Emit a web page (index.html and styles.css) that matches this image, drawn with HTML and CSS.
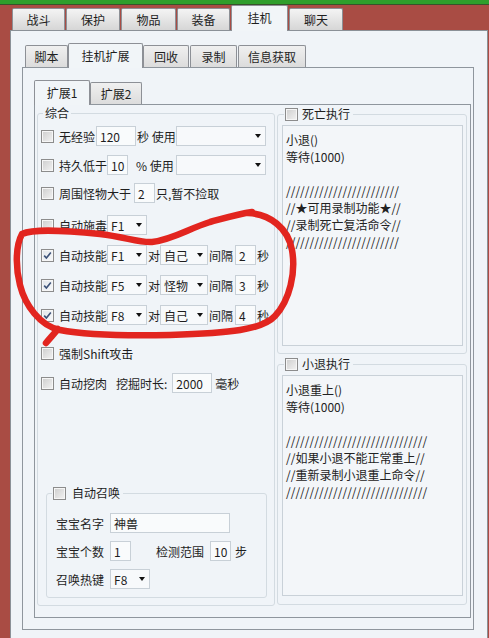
FILE: index.html
```html
<!DOCTYPE html>
<html lang="zh-CN">
<head>
  <meta charset="UTF-8">
  <meta name="viewport" content="width=device-width, initial-scale=1.0">
  <title>挂机扩展</title>
  <link rel="stylesheet" href="styles.css">
</head>
<body>
  <div class="topbar"></div>
  <div class="main">
    <div class="tabs outer-tabs">
      <div class="tab w53">战斗</div>
      <div class="tab w54">保护</div>
      <div class="tab w55">物品</div>
      <div class="tab w53">装备</div>
      <div class="tab active w57">挂机</div>
      <div class="tab w54">聊天</div>
    </div>

    <div class="page">
      <div class="tabs sub-tabs">
        <div class="tab w43">脚本</div>
        <div class="tab active w75">挂机扩展</div>
        <div class="tab w46">回收</div>
        <div class="tab w47 ml1">录制</div>
        <div class="tab w68 ml1">信息获取</div>
      </div>

      <div class="panel">
        <div class="tabs sub-tabs">
          <div class="tab active w56">扩展1</div>
          <div class="tab w52">扩展2</div>
        </div>

        <div class="panel inner">
          <fieldset class="group main-group">
            <legend>综合</legend>

            <div class="row">
              <span class="cb"></span><span>无经验</span><span class="box w40 ml1">120</span><span class="ml1">秒 使用</span>
              <span class="select w90 push"><i class="arrow"></i></span>
            </div>
            <div class="row mt9">
              <span class="cb"></span><span>持久低于</span><span class="box w21">10</span><span class="ml8">% 使用</span>
              <span class="select w90 push"><i class="arrow"></i></span>
            </div>
            <div class="row mt8">
              <span class="cb"></span><span>周围怪物大于</span><span class="box w21 ml3">2</span><span class="ml1">只,暂不捡取</span>
            </div>
            <div class="row mt12">
              <span class="cb"></span><span>自动施毒</span><span class="select w40">F1<i class="arrow"></i></span>
            </div>
            <div class="row mt10">
              <span class="cb on"><svg width="9" height="9" viewBox="0 0 9 9"><path d="M1.2 4.6 L3.4 7 L7.8 1.6" fill="none" stroke="#3d5278" stroke-width="1.6"/></svg></span><span>自动技能</span><span class="select w40">F1<i class="arrow"></i></span><span class="ml1">对</span><span class="select w48">自己<i class="arrow"></i></span><span class="ml1">间隔</span><span class="box w21 ml2">2</span><span class="ml1">秒</span>
            </div>
            <div class="row mt10">
              <span class="cb on"><svg width="9" height="9" viewBox="0 0 9 9"><path d="M1.2 4.6 L3.4 7 L7.8 1.6" fill="none" stroke="#3d5278" stroke-width="1.6"/></svg></span><span>自动技能</span><span class="select w40">F5<i class="arrow"></i></span><span class="ml1">对</span><span class="select w48">怪物<i class="arrow"></i></span><span class="ml1">间隔</span><span class="box w21 ml2">3</span><span class="ml1">秒</span>
            </div>
            <div class="row mt10">
              <span class="cb on"><svg width="9" height="9" viewBox="0 0 9 9"><path d="M1.2 4.6 L3.4 7 L7.8 1.6" fill="none" stroke="#3d5278" stroke-width="1.6"/></svg></span><span>自动技能</span><span class="select w40">F8<i class="arrow"></i></span><span class="ml1">对</span><span class="select w48">自己<i class="arrow"></i></span><span class="ml1">间隔</span><span class="box w21 ml2">4</span><span class="ml1">秒</span>
            </div>
            <div class="row mt18">
              <span class="cb"></span><span>强制Shift攻击</span>
            </div>
            <div class="row mt10">
              <span class="cb"></span><span>自动挖肉</span><span class="ml9">挖掘时长:</span><span class="box w40 ml5">2000</span><span class="ml3">毫秒</span>
            </div>

            <fieldset class="group summon">
              <legend><span class="cb"></span><span class="ml6">自动召唤</span></legend>
              <div class="row">
                <span>宝宝名字</span><span class="box w120 ml6">神兽</span>
              </div>
              <div class="row mt8">
                <span>宝宝个数</span><span class="box w21 ml6">1</span><span class="ml25">检测范围</span><span class="box w21 ml6">10</span><span class="ml4">步</span>
              </div>
              <div class="row mt8">
                <span>召唤热键</span><span class="select w40 ml6">F8<i class="arrow"></i></span>
              </div>
            </fieldset>
          </fieldset>

          <div class="side">
            <fieldset class="group script-group">
              <legend><span class="cb"></span><span class="ml4">死亡执行</span></legend>
              <div class="memo">小退()
等待(1000)

////////////////////////
//★可用录制功能★//
//录制死亡复活命令//
////////////////////////</div>
            </fieldset>

            <fieldset class="group script-group second">
              <legend><span class="cb"></span><span class="ml4">小退执行</span></legend>
              <div class="memo">小退重上()
等待(1000)

//////////////////////////////
//如果小退不能正常重上//
//重新录制小退重上命令//
//////////////////////////////</div>
            </fieldset>
          </div>
        </div>
      </div>
    </div>
  </div>

  <svg class="marker" width="489" height="638" viewBox="0 0 489 638">
    <path d="M248 213 C270 214 288 228 292 250 C296 272 290 300 275 316 C262 330 230 333 170 335 C120 336 80 334 60 330 C40 326 25 305 20 285 C15 265 16 245 22 234 C35 228 70 231 100 234 C125 237 140 243 152 242 C172 240 190 228 210 222 C225 218 238 214 252 212 M58 329 C54 334 50 338 46 343" fill="none" stroke="#e2251f" stroke-width="6.5" stroke-linecap="round" stroke-linejoin="round"/>
  </svg>
</body>
</html>
```

FILE: styles.css
```css
* {
  box-sizing: border-box;
}

body {
  margin: 0;
  height: 638px;
  overflow: hidden;
  position: relative;
  background: #a94c44;
  font-family: "Noto Sans CJK SC", "Microsoft YaHei", sans-serif;
  font-size: 12px;
  color: #1e1e1e;
}

.topbar {
  height: 5px;
  background: #2f9e2c;
  border-bottom: 1px solid #37532b;
}

.main {
  padding-left: 10px;
}

/* tab strips */
.tabs {
  display: flex;
  align-items: flex-end;
}

.outer-tabs {
  padding-left: 2px;
}

.tab {
  height: 22px;
  border: 1px solid #8d9096;
  border-bottom: none;
  border-radius: 2px 2px 0 0;
  background: linear-gradient(#f4f4f4, #d6d6d6);
  display: flex;
  align-items: center;
  justify-content: center;
  margin-right: 1px;
}

.tab.active {
  height: 26px;
  margin-bottom: -1px;
  padding-bottom: 2px;
  background: #f1f5f8;
  position: relative;
  z-index: 1;
}

.sub-tabs .tab {
  margin-right: 0;
  background: linear-gradient(#f0f0f0, #dcdcdc);
}

.sub-tabs .tab.active {
  height: 25px;
  background: #f1f5f8;
}

.sub-tabs {
  padding-left: 3px;
}

.panel .sub-tabs {
  padding-left: 0;
}

/* panels */
.page {
  margin-right: 1px;
  height: 608px;
  border: 1px solid #8b9197;
  border-bottom: none;
  background: #f0f4f8;
  padding: 12px 13px 0 11px;
}

.panel {
  border: 1px solid #8f969d;
  background: #f0f4f8;
  padding: 12px 2px 11px 11px;
}

.panel.inner {
  height: 514px;
  padding: 0 3px 11px 2px;
  display: flex;
  gap: 2px;
}

/* group boxes */
.group {
  margin: 0;
  min-width: 0;
  border: 1px solid #d3dbe1;
  border-radius: 3px;
}

.group legend {
  padding: 0 2px;
  margin-left: 2px;
  line-height: 16px;
  height: 16px;
  display: flex;
  align-items: center;
}

.main-group {
  width: 238px;
  padding: 5px 3px 6px 3px;
}

.summon {
  width: 221px;
  margin: 92px 0 0 5px;
  padding: 12px 4px 8px 9px;
}

.summon legend {
  margin-left: -4px;
  padding: 0 3px 0 1px;
}

.side {
  width: 190px;
  display: flex;
  flex-direction: column;
}

.script-group {
  margin-top: 1px;
  padding: 3px 3px 7px 4px;
}

.script-group.second {
  margin-top: 2px;
  padding-bottom: 8px;
}

.script-group legend {
  padding: 0 3px 0 1px;
}

.memo {
  height: 221px;
  border: 1px solid #c9d1d8;
  background: #f3f6f9;
  padding: 5px 3px;
  line-height: 17px;
  white-space: pre;
  overflow: hidden;
  color: #222;
}

/* rows and controls */
.row {
  display: flex;
  align-items: center;
  height: 20px;
  white-space: nowrap;
}

.cb {
  width: 13px;
  height: 13px;
  flex: none;
  margin-right: 5px;
  border: 1px solid #8c8c8c;
  background: linear-gradient(135deg, #cdcdcd, #f3f3f3);
  box-shadow: inset 0 0 0 1px #f6f6f6;
  display: inline-flex;
  align-items: center;
  justify-content: center;
}

legend .cb {
  margin-right: 0;
}

.cb.on {
  background: linear-gradient(135deg, #e2e6ea, #f8f9fa);
}

.box {
  height: 20px;
  border: 1px solid #c8d0d7;
  background: #f9fbfc;
  padding-left: 3px;
  display: inline-flex;
  align-items: center;
  flex: none;
}

.select {
  height: 20px;
  border: 1px solid #c8d0d7;
  background: #f7f9fb;
  padding: 0 4px 0 3px;
  display: inline-flex;
  align-items: center;
  justify-content: space-between;
  flex: none;
}

.select .arrow:only-child {
  margin-left: auto;
}

.arrow {
  width: 0;
  height: 0;
  border-left: 3.5px solid transparent;
  border-right: 3.5px solid transparent;
  border-top: 4px solid #111;
}

.push {
  margin-left: auto;
  margin-right: 5px;
}

.marker {
  position: absolute;
  top: 0;
  left: 0;
  pointer-events: none;
}

/* sizes and spacing */
.w21 { width: 21px; }
.w40 { width: 40px; }
.w43 { width: 43px; }
.w46 { width: 46px; }
.w47 { width: 47px; }
.w48 { width: 48px; }
.w52 { width: 52px; }
.w53 { width: 53px; }
.w54 { width: 54px; }
.w55 { width: 55px; }
.w56 { width: 56px; }
.w57 { width: 57px; }
.w68 { width: 68px; }
.w75 { width: 75px; }
.w90 { width: 90px; }
.w120 { width: 120px; }

.ml1 { margin-left: 1px; }
.ml2 { margin-left: 2px; }
.ml3 { margin-left: 3px; }
.ml4 { margin-left: 4px; }
.ml5 { margin-left: 5px; }
.ml6 { margin-left: 6px; }
.ml8 { margin-left: 8px; }
.ml9 { margin-left: 9px; }
.ml25 { margin-left: 25px; }

.mt8 { margin-top: 8px; }
.mt9 { margin-top: 9px; }
.mt10 { margin-top: 10px; }
.mt12 { margin-top: 12px; }
.mt18 { margin-top: 18px; }
```
